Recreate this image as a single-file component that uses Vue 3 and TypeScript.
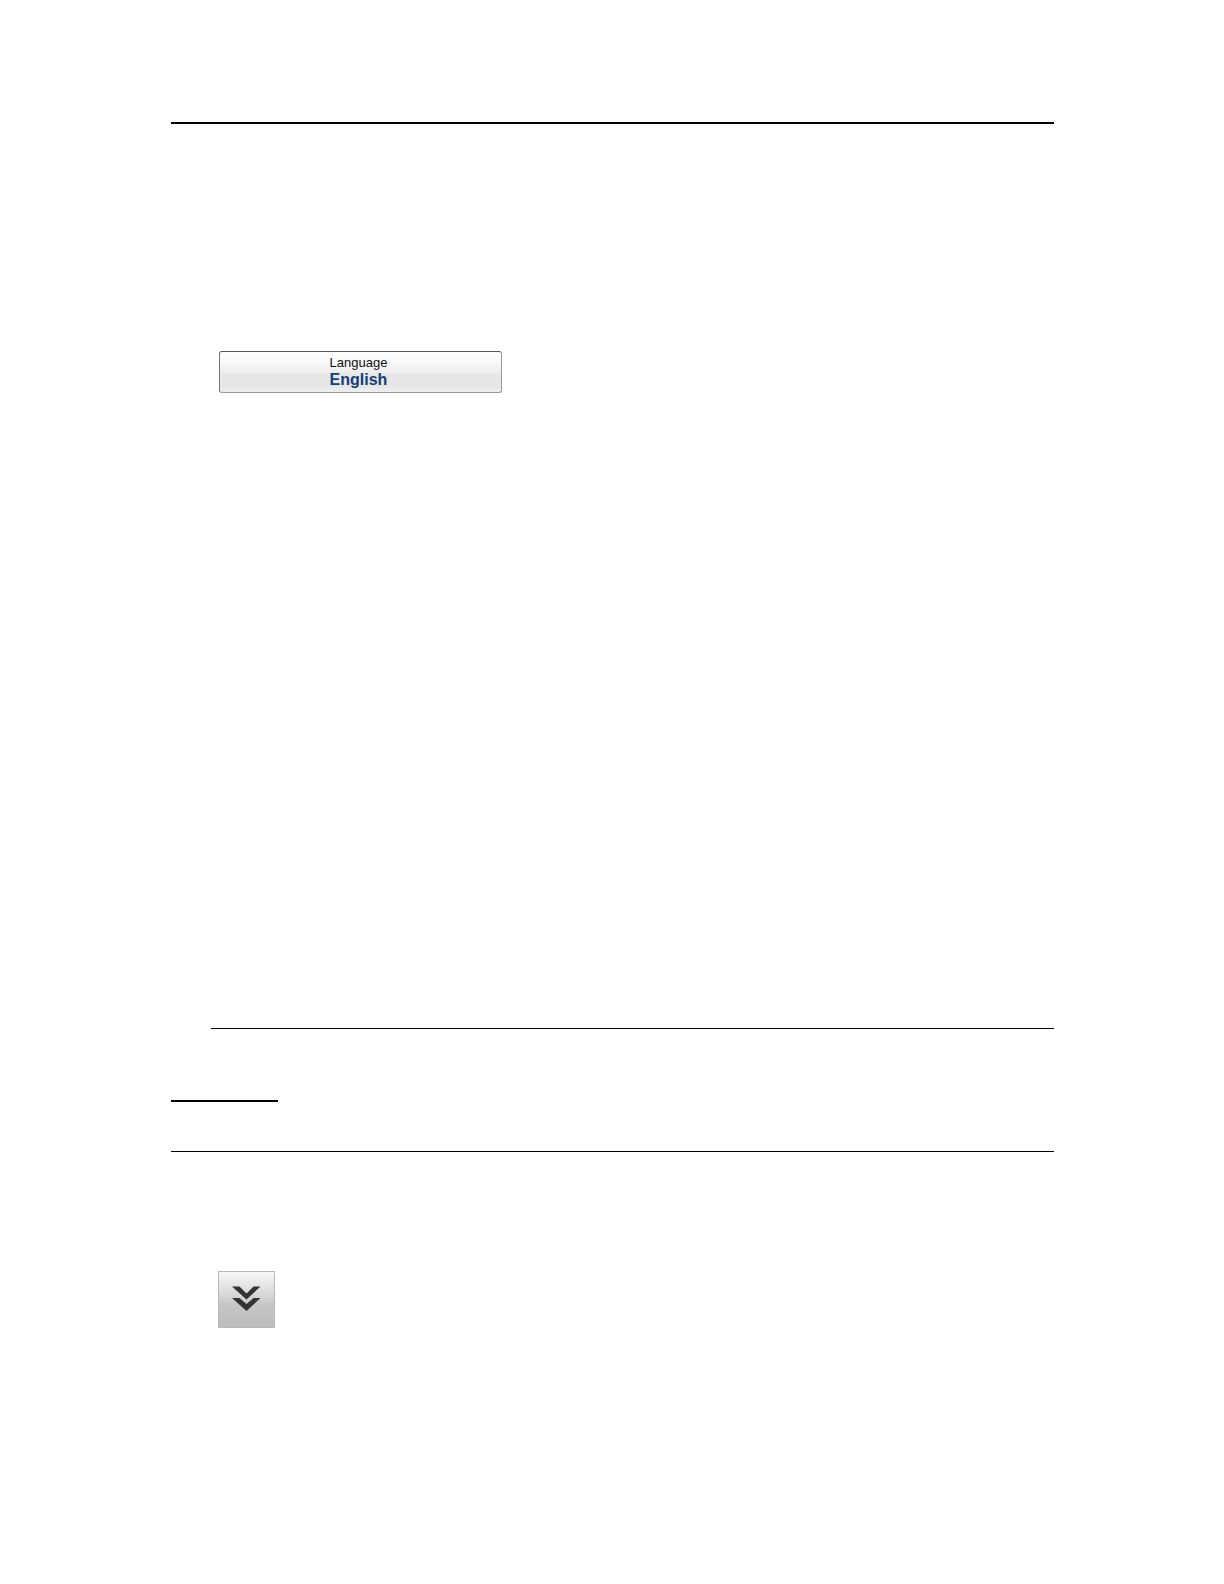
<script setup lang="ts">
import { ref } from 'vue'

const language = ref<string>('English')
</script>

<template>
  <main class="page">
    <hr class="rule thick" />
    <button class="language" type="button">
      <span class="caption">Language</span>
      <span class="value">{{ language }}</span>
    </button>
    <hr class="rule inset" />
    <hr class="rule thick short" />
    <hr class="rule full" />
    <button class="expand" type="button" aria-label="Show more">
      <svg width="55" height="55" viewBox="0 0 55 55" aria-hidden="true">
        <path d="M13 14.500H20.500L27.500 21.500L34.500 14.500H41.500L27.500 27.500Z" fill="#333" />
        <path d="M13 26H20.500L27.500 32L34.500 26H41.500L27.500 39Z" fill="#333" />
      </svg>
    </button>
  </main>
</template>

<style>
body {
  margin: 0;
  background: #fff;
}
</style>

<style scoped>
.page {
  display: flex;
  flex-direction: column;
  padding: 122px 170px 256px 171px;
  font-family: "Liberation Sans", Arial, sans-serif;
}

.rule {
  width: 100%;
  height: 1px;
  margin: 0;
  border: 0;
  background: #000;
}

.thick {
  height: 2px;
}

.inset {
  width: auto;
  margin: 635px 0 71px 40px;
}

.short {
  width: 107px;
  margin-bottom: 49px;
}

.language {
  display: flex;
  flex-direction: column;
  align-items: center;
  justify-content: center;
  box-sizing: border-box;
  width: 283px;
  height: 42px;
  margin: 227px 0 0 48px;
  padding: 0 4px 0 0;
  border: 1px solid #999;
  border-top-color: #555;
  border-left-color: #777;
  border-radius: 3px;
  background: linear-gradient(#fff 0%, #fbfbfb 20%, #efefef 48%, #e6e6e6 58%, #e6e6e6 85%, #eee 100%);
  font-family: inherit;
}

.caption {
  color: #111;
  font-size: 13px;
  line-height: 16px;
}

.value {
  color: #123f78;
  font-size: 16px;
  font-weight: 700;
  line-height: 18px;
}

.expand {
  box-sizing: border-box;
  width: 57px;
  height: 57px;
  margin: 119px 0 0 47px;
  padding: 0;
  border: 1px solid #b9b9b9;
  background: linear-gradient(#f8f8f8 0%, #d8d8d8 40%, #c6c6c6 60%, #bcbcbc 100%);
}

.expand svg {
  display: block;
}
</style>
